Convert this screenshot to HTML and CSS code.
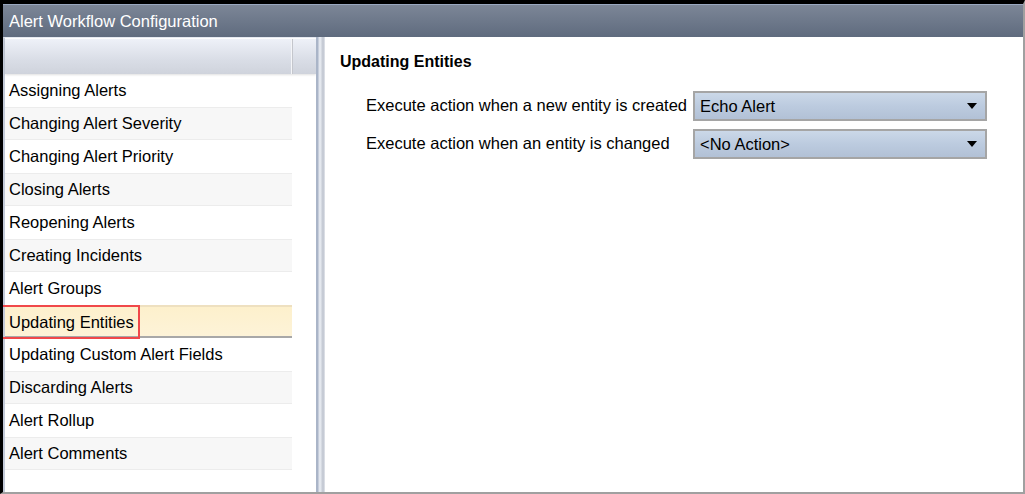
FILE: index.html
```html
<!DOCTYPE html>
<html>
<head>
<meta charset="utf-8">
<link rel="stylesheet" href="styles.css">
</head>
<body>
<div class="window">
  <div class="titlebar">Alert Workflow Configuration</div>
  <div class="main">
    <div class="left">
      <div class="colhead"><div class="colcell"></div><div class="colrest"></div></div>
      <div class="list">
        <div class="row">Assigning Alerts</div>
        <div class="row alt">Changing Alert Severity</div>
        <div class="row">Changing Alert Priority</div>
        <div class="row alt">Closing Alerts</div>
        <div class="row">Reopening Alerts</div>
        <div class="row alt">Creating Incidents</div>
        <div class="row">Alert Groups</div>
        <div class="row selected"><span class="hl">Updating Entities</span></div>
        <div class="row">Updating Custom Alert Fields</div>
        <div class="row alt">Discarding Alerts</div>
        <div class="row">Alert Rollup</div>
        <div class="row alt">Alert Comments</div>
      </div>
    </div>
    <div class="splitter"></div>
    <div class="right">
      <div class="heading">Updating Entities</div>
      <div class="form">
        <div class="label">Execute action when a new entity is created</div>
        <div class="select"><span>Echo Alert</span><span class="arrow"></span></div>
        <div class="label">Execute action when an entity is changed</div>
        <div class="select"><span>&lt;No Action&gt;</span><span class="arrow"></span></div>
      </div>
    </div>
  </div>
</div>
</body>
</html>
```

FILE: styles.css
```css
html, body {
  margin: 0;
  padding: 0;
  background: #ffffff;
}
body {
  font-family: "Liberation Sans", Arial, sans-serif;
  font-size: 16.5px;
  color: #000;
}
.window {
  width: 1025px;
  height: 494px;
  box-sizing: border-box;
  border-top: 4px solid #000;
  border-left: 3px solid #000;
  border-right: 2px solid #a0a0a0;
  border-bottom: 2px solid #a0a0a0;
  display: flex;
  flex-direction: column;
  overflow: hidden;
}
.titlebar {
  height: 33px;
  box-sizing: border-box;
  border-top: 1px solid #9aa8c0;
  background: linear-gradient(#7c8697, #5f6b7e);
  color: #ffffff;
  padding-left: 6px;
  line-height: 32px;
  flex: none;
}
.main {
  flex: 1;
  display: flex;
  min-height: 0;
}
.left {
  width: 313px;
  box-sizing: border-box;
  border-left: 2px solid #c3cad8;
  border-top: 1px solid #e4e8f0;
  background: #fff;
  display: flex;
  flex-direction: column;
}
.colhead {
  height: 35px;
  display: flex;
  flex: none;
  margin-top: 1px;
  box-shadow: 0 1px 2px rgba(0,0,0,0.12);
}
.colcell {
  width: 287px;
  background: linear-gradient(#eef1f8, #d9dde6 60%, #cfd3dc);
  border-right: 1px solid #c4c6cc;
  box-shadow: inset -1px 0 0 #f4f5f8;
}
.colrest {
  flex: 1;
  background: linear-gradient(#eef1f8, #d9dde6 60%, #cfd3dc);
}
.list {
  width: 287px;
}
.row {
  height: 33px;
  box-sizing: border-box;
  line-height: 31px;
  padding-left: 4px;
  border-top: 1px solid transparent;
  border-bottom: 1px solid transparent;
  white-space: nowrap;
}
.row.alt {
  background: #f7f7f7;
  border-top-color: #ececec;
  border-bottom-color: #ececec;
}
.row.selected {
  background: linear-gradient(#fdf0cc, #fdf3d8);
  border-top: 2px solid #eee0c0;
  border-bottom: 2px solid #a8a8a8;
  line-height: 29px;
  position: relative;
}
.hl {
  position: absolute;
  left: -4px;
  top: -2px;
  height: 34px;
  box-sizing: border-box;
  border: 2px solid #f0484a;
  padding-left: 6px;
  padding-right: 4px;
  line-height: 30px;
}
.splitter {
  width: 9px;
  flex: none;
  background: linear-gradient(to right, #aab5c8 0, #aab5c8 2px, #e2e6ee 3px, #e4e8ee 5px, #c6cbd5 6px, #c6cbd5 8px, #eef0f4 9px);
}
.right {
  flex: 1;
  padding-left: 15px;
  padding-top: 15px;
}
.heading {
  font-weight: bold;
  font-size: 16px;
  line-height: 20px;
}
.form {
  display: grid;
  grid-template-columns: 327px 294px;
  grid-auto-rows: 30px;
  row-gap: 8px;
  margin-top: 19px;
  padding-left: 26px;
  align-items: center;
}
.label {
  line-height: 30px;
  padding-bottom: 2px;
}
.select {
  height: 30px;
  box-sizing: border-box;
  border: 2px solid #a5a5a5;
  background: linear-gradient(#cbd8e8, #bccbdf 50%, #b2c1d6);
  display: flex;
  align-items: center;
  justify-content: space-between;
  padding-left: 5px;
  padding-right: 8px;
  line-height: 26px;
}
.arrow {
  width: 0;
  height: 0;
  border-left: 5px solid transparent;
  border-right: 5px solid transparent;
  border-top: 6px solid #000;
}
```
